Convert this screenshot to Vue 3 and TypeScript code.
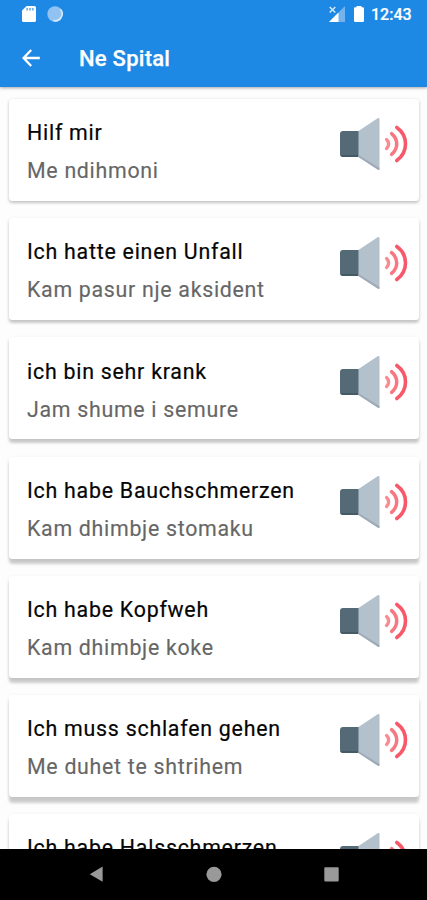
<script setup lang="ts">
interface Phrase {
  german: string
  albanian?: string
}

const phrases: Phrase[] = [
  { german: 'Hilf mir', albanian: 'Me ndihmoni' },
  { german: 'Ich hatte einen Unfall', albanian: 'Kam pasur nje aksident' },
  { german: 'ich bin sehr krank', albanian: 'Jam shume i semure' },
  { german: 'Ich habe Bauchschmerzen', albanian: 'Kam dhimbje stomaku' },
  { german: 'Ich habe Kopfweh', albanian: 'Kam dhimbje koke' },
  { german: 'Ich muss schlafen gehen', albanian: 'Me duhet te shtrihem' },
  { german: 'Ich habe Halsschmerzen' },
]

// The shadow falls further below a card the lower it sits on the screen.
function cardShadow(index: number): string {
  const drop = 1.2 + index * 0.95
  return `0 ${drop}px 3px rgba(0, 0, 0, 0.19), 0 1px 4px rgba(0, 0, 0, 0.07)`
}
</script>

<template>
  <div class="screen">
    <header class="top">
      <div class="status">
        <svg class="sd" viewBox="0 0 14 16" width="14" height="16">
          <path d="M4.6 0H12.4Q14 0 14 1.6V14.4Q14 16 12.4 16H1.6Q0 16 0 14.4V4.6Z" fill="#fff" />
          <path d="M5.2 2V4.4M8 2V4.4M10.8 2V4.4" stroke="#1e88e5" stroke-width="1.7" opacity=".65" />
        </svg>
        <svg class="sync" viewBox="0 0 16 16" width="16" height="16">
          <circle cx="8" cy="8" r="7.7" fill="#90c3f2" />
          <path d="M13.4 3.2A7 7 0 0 1 6.4 14.6" fill="none" stroke="#d9eafa" stroke-width="1.5" />
        </svg>
        <span class="spacer"></span>
        <svg class="signal" viewBox="0 0 16 16" width="16" height="16">
          <path d="M16 0V16H0L7 9V9L16 0Z" fill="#73b3ee" />
          <path d="M9.5 6.5V16H0Z" fill="#fff" />
          <path d="M.7.9L6.3 6.5M6.3.9L.7 6.5" stroke="#d9eafa" stroke-width="1.4" />
        </svg>
        <svg class="battery" viewBox="0 0 10 16" width="10" height="16">
          <path d="M2.500 0H7.500V1.200H8.800Q10 1.200 10 2.400V14.800Q10 16 8.800 16H1.200Q0 16 0 14.800V2.400Q0 1.200 1.200 1.200H2.500Z" fill="#fff" />
        </svg>
        <span class="clock">12:43</span>
      </div>
      <div class="bar">
        <svg class="back" viewBox="0 0 18 18" width="18" height="18">
          <path d="M9.200 1L1.600 9L9.200 17M1.800 9H17.800" fill="none" stroke="#fff" stroke-width="2.300" />
        </svg>
        <h1>Ne Spital</h1>
      </div>
    </header>

    <main class="list">
      <article
        v-for="(phrase, index) in phrases"
        :key="phrase.german"
        class="card"
        :style="{ boxShadow: cardShadow(index) }"
      >
        <div class="words">
          <p class="german">{{ phrase.german }}</p>
          <p v-if="phrase.albanian" class="albanian">{{ phrase.albanian }}</p>
        </div>
        <svg class="speaker" viewBox="0 0 68 54" width="68" height="54">
          <path d="M3 14H20V40H3Q0 40 0 37V17Q0 14 3 14Z" fill="#546a76" />
          <path d="M.3 38H20V40H3Q1 40 .3 38Z" fill="#455a64" />
          <path d="M18.500 14L37.600 1.300Q39.500 .2 39.500 2V51.800Q39.500 53.800 37.600 52.600L18.500 40Z" fill="#b3c1cc" />
          <path d="M18.500 38L39.500 51V51.800Q39.500 53.800 37.600 52.600L18.500 40Z" fill="#9faab9" />
          <g fill="none" stroke-linecap="round">
            <path d="M46.600 22.600C49.300 25 49.300 29 46.600 31.400" stroke="#f98b92" stroke-width="3.400" />
            <path d="M51.600 16.600C58.400 22.400 58.400 31.600 51.600 37.400" stroke="#f77882" stroke-width="3.500" />
            <path d="M56.800 10.500C68.400 18.800 68.400 35.200 56.800 43.500" stroke="#f8596a" stroke-width="3.600" />
          </g>
        </svg>
      </article>
    </main>

    <nav class="nav">
      <svg viewBox="0 0 427 51" width="427" height="51">
        <g fill="#999">
          <path d="M89.800 25.200L102.600 17.600V32.800Z" />
          <circle cx="214" cy="25.300" r="7.600" />
          <rect x="324.300" y="18.200" width="14.400" height="14.200" rx=".8" />
        </g>
      </svg>
    </nav>
  </div>
</template>

<style>
body {
  margin: 0;
  background: #fcfcfc;
}
</style>

<style scoped>
.screen {
  display: flex;
  flex-direction: column;
  width: 427px;
  height: 900px;
  overflow: hidden;
  background: #fdfdfd;
  font-family: Roboto, "Liberation Sans", sans-serif;
}

.top {
  flex: none;
  height: 87px;
  background: #1e88e5;
  box-shadow: 0 1px 3px rgba(0, 0, 0, 0.35);
  color: #fff;
  z-index: 1;
}

.status {
  display: flex;
  align-items: center;
  height: 28px;
  padding: 0 16px 0 22px;
}

.sync {
  margin-left: 11px;
}

.spacer {
  flex: 1;
}

.battery {
  margin-left: 9px;
}

.clock {
  width: 40px;
  margin-left: 7px;
  padding-top: 1px;
  font-size: 16px;
  font-weight: 500;
  line-height: 28px;
  white-space: nowrap;
  -webkit-text-stroke: 0.2px currentColor;
}

.bar {
  display: flex;
  align-items: center;
  height: 58px;
  padding-left: 22px;
}

h1 {
  margin: 4px 0 0 39px;
  font-size: 22px;
  font-weight: 500;
  line-height: 28px;
  letter-spacing: 0.25px;
  -webkit-text-stroke: 0.25px currentColor;
}

.back {
  margin-top: 1px;
}

.list {
  display: flex;
  flex: 1;
  flex-direction: column;
  gap: 17.2px;
  min-height: 0;
  padding: 12px 8px 0 9px;
  overflow: hidden;
}

.card {
  display: flex;
  flex: none;
  justify-content: space-between;
  box-sizing: border-box;
  height: 102px;
  padding: 18px 11px 0 18px;
  border-radius: 3.500px;
  background: #fff;
}

.german,
.albanian {
  margin: 0;
  font-size: 21.350px;
  line-height: 32px;
  white-space: nowrap;
}

.german {
  color: #050505;
  letter-spacing: 0.76px;
  -webkit-text-stroke: 0.2px currentColor;
}

.albanian {
  margin-top: 6px;
  color: #666;
  letter-spacing: 0.71px;
  -webkit-text-stroke: 0.15px currentColor;
}

.words {
  padding-top: 0.3px;
}

.speaker {
  flex: none;
}

.nav {
  flex: none;
  height: 51px;
  background: #000;
  z-index: 1;
}

.nav svg {
  display: block;
}
</style>
